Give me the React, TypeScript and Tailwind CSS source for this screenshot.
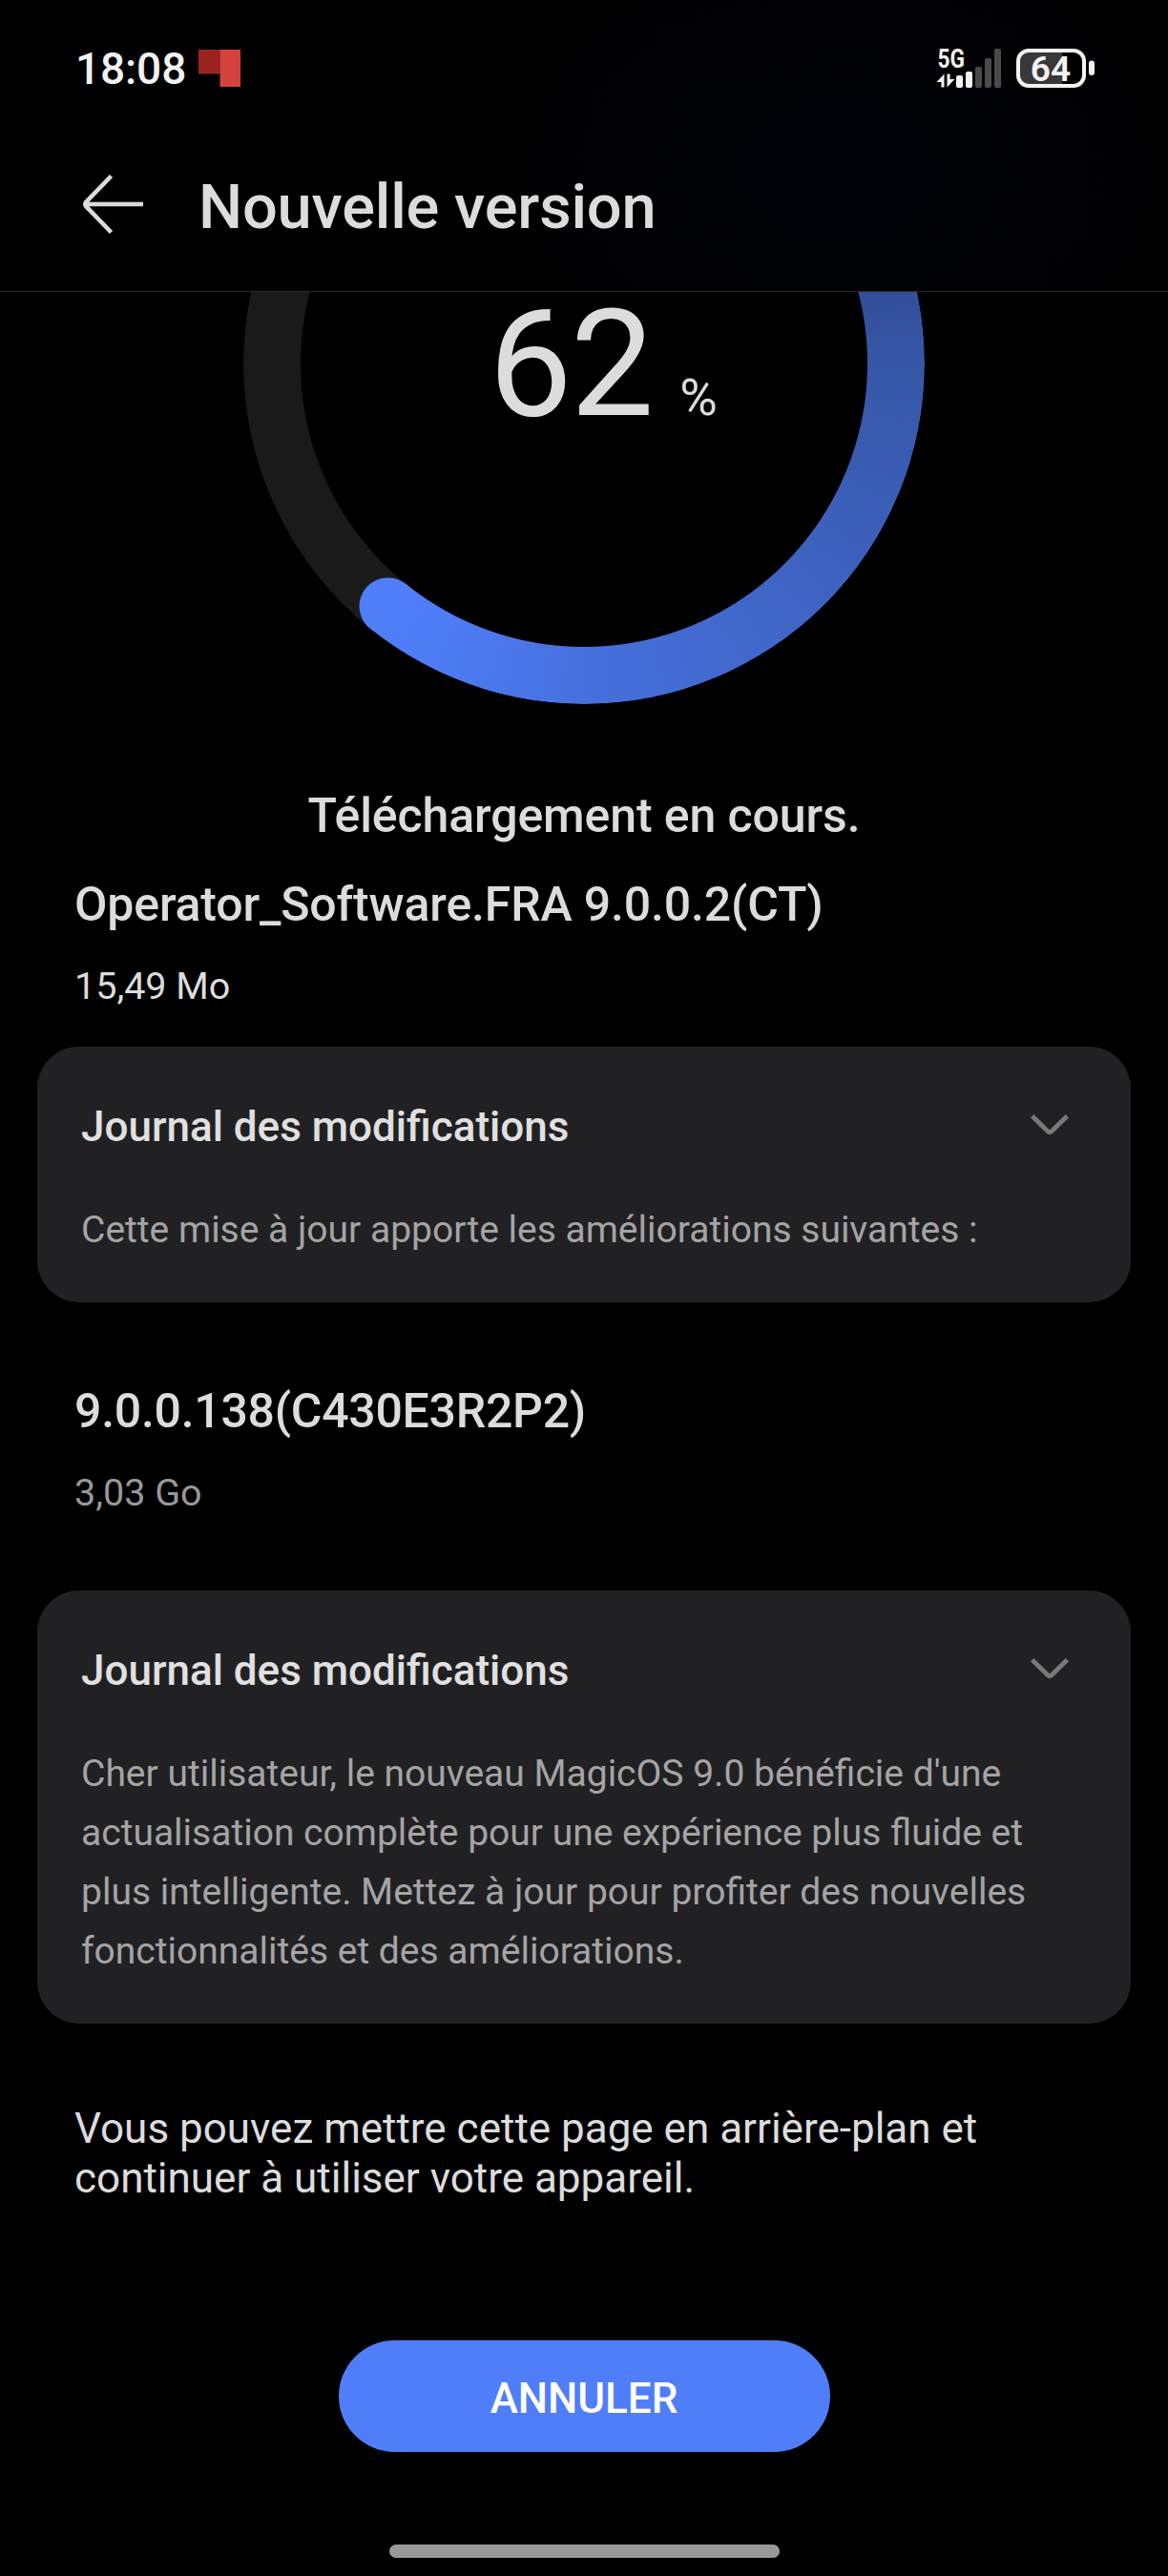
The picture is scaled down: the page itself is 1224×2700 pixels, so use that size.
import type { ReactNode } from "react";

const progress = 62;

const signalBars = [
  { x: 20, y: 28, active: true },
  { x: 30, y: 24, active: true },
  { x: 40, y: 19, active: false },
  { x: 50, y: 10, active: false },
  { x: 60, y: 0, active: false },
];

function Chevron() {
  return (
    <svg width="40" height="22" viewBox="0 0 40 22" fill="none">
      <path d="M1.6 1.8 L18 17.8 Q20 19.6 22 17.8 L38.4 1.8" stroke="#79797a" strokeWidth="4.8" />
    </svg>
  );
}

function ChangelogCard({ children }: { children: ReactNode }) {
  return (
    <section className="mx-[39px] rounded-[44px] bg-[#212123] pt-[57px] pr-[65px] pb-[45px] pl-[46px]">
      <div className="flex h-[54px] items-center justify-between">
        <h3 className="text-[44px] leading-[54px] font-medium text-[#e0e0e1]">Journal des modifications</h3>
        <div className="pb-1">
          <Chevron />
        </div>
      </div>
      <p className="mt-[50px] text-[39px] leading-[62px] whitespace-nowrap text-[#a4a4a5]">{children}</p>
    </section>
  );
}

function StatusBar() {
  return (
    <div className="flex h-[142px] items-center justify-between pr-[76px] pl-[79px]">
      <div className="flex items-center">
        <span className="w-[129px] pt-px text-[46px] leading-[54px] font-medium tracking-[-0.1px] text-[#f2f2f2]">
          18:08
        </span>
        <svg width="44" height="39" viewBox="0 0 44 39">
          <rect width="22.5" height="25.5" fill="#9b231f" />
          <rect x="22.5" width="21.5" height="39" fill="#d5423e" />
        </svg>
      </div>

      <div className="flex items-center gap-4">
        {/* 5G + signal */}
        <svg className="overflow-visible" width="67" height="41" viewBox="0 0 67 41" fill="#f2f2f2">
          <text
            x="0.5"
            y="20.3"
            fontFamily="Roboto, sans-serif"
            fontWeight="700"
            fontSize="28"
            textLength="28.5"
            lengthAdjust="spacingAndGlyphs"
          >
            5G
          </text>
          <path d="M7.5 26.5 V40.5 H4.4 V35 H-0.5 Z" />
          <path d="M10.5 40.5 V26.5 H13.6 V32 H18.5 Z" />
          {signalBars.map((bar) => (
            <rect
              key={bar.x}
              x={bar.x}
              y={bar.y}
              width="7"
              height={41 - bar.y}
              rx="2"
              fill={bar.active ? "#f2f2f2" : "#4a4a4a"}
            />
          ))}
        </svg>

        {/* Batterie */}
        <svg className="overflow-visible" width="83" height="41" viewBox="0 0 83 41">
          <rect x="3" y="3" width="45" height="35" rx="9" fill="#383838" />
          <rect x="40" y="3" width="8" height="35" fill="#383838" />
          <rect x="2" y="2" width="69" height="37" rx="11" fill="none" stroke="#f2f2f2" strokeWidth="4" />
          <rect x="76" y="12.5" width="6" height="15.5" rx="3" fill="#f2f2f2" />
          <text
            x="36"
            y="33.7"
            textAnchor="middle"
            fontFamily="Roboto, sans-serif"
            fontWeight="600"
            fontSize="37"
            fill="#f2f2f2"
          >
            64
          </text>
        </svg>
      </div>
    </div>
  );
}

function ProgressRing() {
  return (
    <div className="flex h-[432px] items-end justify-center [clip-path:inset(0)]">
      <div className="relative size-[714px] shrink-0">
        <div className="absolute inset-0 rounded-full bg-[conic-gradient(#2c4588_0deg,#334f9b_77deg,#3656a6_90deg,#3e63c3_135deg,#4670dd_180deg,#4f7ef8_213deg,#4f7ef8_219deg,#1a1a1a_219deg)] [mask-image:radial-gradient(circle,transparent_296.5px,black_297.5px)]" />
        <svg className="absolute inset-0" width="714" height="714" viewBox="0 0 714 714">
          <circle cx="151.5" cy="611.5" r="30" fill="#4f7ef8" />
        </svg>
        <div className="absolute top-[288px] left-[257px] flex items-baseline text-[#dcdcdc]">
          <span className="text-[156px] leading-[140px] tracking-[-2px]">{progress}</span>
          <span className="ml-[29px] text-[54px] leading-[60px]">%</span>
        </div>
      </div>
    </div>
  );
}

export default function App() {
  return (
    <div className="h-[2700px] w-[1224px] overflow-hidden bg-black font-['Roboto','Liberation_Sans',sans-serif] text-[#dcdcdc]">
      {/* En-tête */}
      <header className="h-[306px] border-b border-[#2b2b2b] bg-[radial-gradient(ellipse_420px_300px_at_880px_180px,#010208,#000000)]">
        <StatusBar />
        <div className="flex h-[150px] items-center pl-[86px]">
          <svg className="mb-[6px]" width="65" height="64" viewBox="0 0 65 64" fill="none">
            <path d="M30.5 2.5 L4 30 Q2.6 32 4 34 L30.5 61.5 M4 32 H64" stroke="#dcdcdc" strokeWidth="4.6" />
          </svg>
          <h1 className="ml-[57px] text-[65px] leading-[76px] font-medium tracking-[-0.2px]">Nouvelle version</h1>
        </div>
      </header>

      <main>
        <ProgressRing />
        <p className="mt-[87px] text-center text-[50px] leading-[60px] font-medium tracking-[-0.1px]">
          Téléchargement en cours.
        </p>

        <div className="mt-[33px] mb-[39px] px-[78px]">
          <h2 className="text-[50px] leading-[60px] font-medium tracking-[-0.15px]">Operator_Software.FRA 9.0.0.2(CT)</h2>
          <p className="mt-8 text-[39.5px] leading-[48px]">15,49 Mo</p>
        </div>
        <ChangelogCard>Cette mise à jour apporte les améliorations suivantes :</ChangelogCard>

        <div className="mt-[84px] mb-[78px] px-[78px]">
          <h2 className="text-[50px] leading-[60px] font-medium tracking-[-0.27px]">9.0.0.138(C430E3R2P2)</h2>
          <p className="mt-8 text-[39.5px] leading-[48px] text-[#989898]">3,03 Go</p>
        </div>
        <ChangelogCard>
          Cher utilisateur, le nouveau MagicOS 9.0 bénéficie d'une
          <br />
          actualisation complète pour une expérience plus fluide et
          <br />
          plus intelligente. Mettez à jour pour profiter des nouvelles
          <br />
          fonctionnalités et des améliorations.
        </ChangelogCard>

        <p className="mt-[84px] px-[78px] text-[44px] leading-[52px]">
          Vous pouvez mettre cette page en arrière-plan et
          <br />
          continuer à utiliser votre appareil.
        </p>
      </main>

      {/* Bas de page */}
      <footer className="flex flex-col items-center pt-[144px]">
        <button className="h-[117px] w-[515px] rounded-full bg-[#4f7ef8] pt-1 text-[44px] font-medium text-white">
          ANNULER
        </button>
        <div className="mt-[97px] h-[14px] w-[409px] rounded-full bg-[#999999]" />
      </footer>
    </div>
  );
}
